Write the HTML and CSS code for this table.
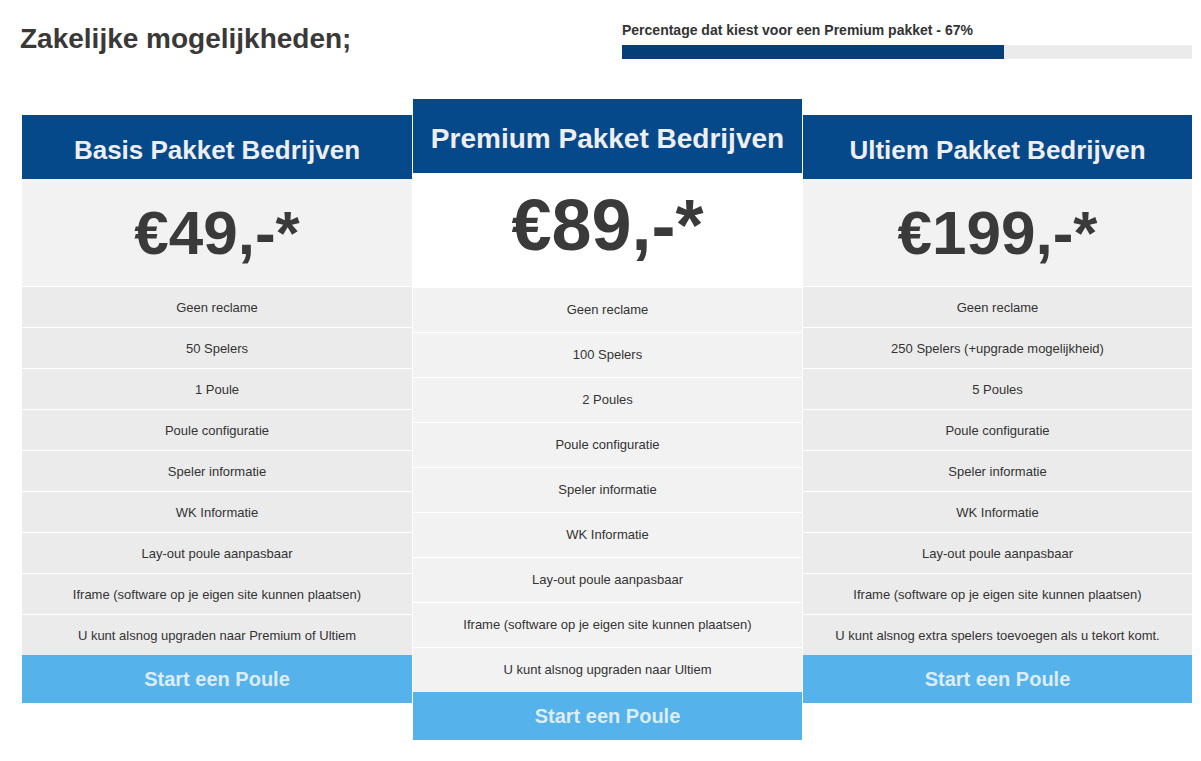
FILE: index.html
```html
<!DOCTYPE html>
<html lang="nl">
<head>
<meta charset="utf-8">
<title>Zakelijke mogelijkheden</title>
<link rel="stylesheet" href="styles.css">
</head>
<body>
<div class="page">
  <div class="top">
    <h1 class="title">Zakelijke mogelijkheden;</h1>
    <div class="progress">
      <div class="progress-label">Percentage dat kiest voor een Premium pakket - 67%</div>
      <div class="progress-track"><div class="progress-fill" style="width:67%"></div></div>
    </div>
  </div>

  <div class="plans">
    <div class="plan plan-side">
      <div class="plan-head">Basis Pakket Bedrijven</div>
      <div class="plan-price">€49,-*</div>
      <ul class="plan-features">
        <li>Geen reclame</li>
        <li>50 Spelers</li>
        <li>1 Poule</li>
        <li>Poule configuratie</li>
        <li>Speler informatie</li>
        <li>WK Informatie</li>
        <li>Lay-out poule aanpasbaar</li>
        <li>Iframe (software op je eigen site kunnen plaatsen)</li>
        <li>U kunt alsnog upgraden naar Premium of Ultiem</li>
      </ul>
      <div class="plan-button">Start een Poule</div>
    </div>

    <div class="plan plan-featured">
      <div class="plan-head">Premium Pakket Bedrijven</div>
      <div class="plan-price">€89,-*</div>
      <ul class="plan-features">
        <li>Geen reclame</li>
        <li>100 Spelers</li>
        <li>2 Poules</li>
        <li>Poule configuratie</li>
        <li>Speler informatie</li>
        <li>WK Informatie</li>
        <li>Lay-out poule aanpasbaar</li>
        <li>Iframe (software op je eigen site kunnen plaatsen)</li>
        <li>U kunt alsnog upgraden naar Ultiem</li>
      </ul>
      <div class="plan-button">Start een Poule</div>
    </div>

    <div class="plan plan-side">
      <div class="plan-head">Ultiem Pakket Bedrijven</div>
      <div class="plan-price">€199,-*</div>
      <ul class="plan-features">
        <li>Geen reclame</li>
        <li>250 Spelers (+upgrade mogelijkheid)</li>
        <li>5 Poules</li>
        <li>Poule configuratie</li>
        <li>Speler informatie</li>
        <li>WK Informatie</li>
        <li>Lay-out poule aanpasbaar</li>
        <li>Iframe (software op je eigen site kunnen plaatsen)</li>
        <li>U kunt alsnog extra spelers toevoegen als u tekort komt.</li>
      </ul>
      <div class="plan-button">Start een Poule</div>
    </div>
  </div>
</div>
</body>
</html>
```
FILE: styles.css
```css
* { box-sizing: border-box; }

html, body {
  margin: 0;
  padding: 0;
  background: #ffffff;
}

body {
  font-family: "Liberation Sans", Arial, Helvetica, sans-serif;
  color: #333333;
}

.page {
  padding: 22px 9px 0 22px;
  width: 1201px;
}

.top {
  display: flex;
  justify-content: space-between;
  align-items: flex-start;
}

.title {
  margin: 1px 0 0 -2px;
  font-size: 28px;
  line-height: 32px;
  font-weight: bold;
  color: #3a3937;
}

.progress {
  width: 570px;
}

.progress-label {
  font-size: 14px;
  line-height: 16px;
  font-weight: bold;
  color: #333333;
}

.progress-track {
  margin-top: 7px;
  height: 14px;
  background: #ebebeb;
}

.progress-fill {
  height: 100%;
  background: #063f78;
}

.plans {
  display: flex;
  align-items: flex-start;
  gap: 1px;
  margin-top: 40px;
  width: 1170px;
}

.plan {
  text-align: center;
}

.plan-side {
  width: 390px;
  margin-top: 16px;
}

.plan-featured + .plan-side {
  width: 389px;
}

.plan-featured {
  width: 389px;
}

.plan-head {
  display: flex;
  align-items: center;
  justify-content: center;
  background: #06498b;
  color: #eeeeee;
  font-weight: bold;
}

.plan-side .plan-head {
  height: 64px;
  padding-top: 6px;
  font-size: 26px;
}

.plan-featured .plan-head {
  height: 74px;
  padding-top: 6px;
  font-size: 28px;
}

.plan-price {
  font-weight: bold;
  line-height: 1;
  color: #3a3a3a;
}

.plan-side .plan-price {
  background: #f2f2f2;
  font-size: 62px;
  padding: 23px 0 22px;
}

.plan-featured .plan-price {
  background: #ffffff;
  font-size: 72px;
  padding: 16px 0 26px;
}

.plan-features {
  list-style: none;
  margin: 0;
  padding: 0;
}

.plan-features li {
  display: flex;
  align-items: center;
  justify-content: center;
  border-top: 1px solid #ffffff;
  font-size: 13px;
  color: #333333;
}

.plan-side .plan-features li {
  height: 41px;
  background: #ebebeb;
}

.plan-featured .plan-features li {
  height: 45px;
  padding-bottom: 2px;
  background: #f2f2f2;
}

.plan-button {
  display: flex;
  align-items: center;
  justify-content: center;
  height: 48px;
  background: #55b2ea;
  color: #dcedfa;
  font-size: 20px;
  font-weight: bold;
}
```
